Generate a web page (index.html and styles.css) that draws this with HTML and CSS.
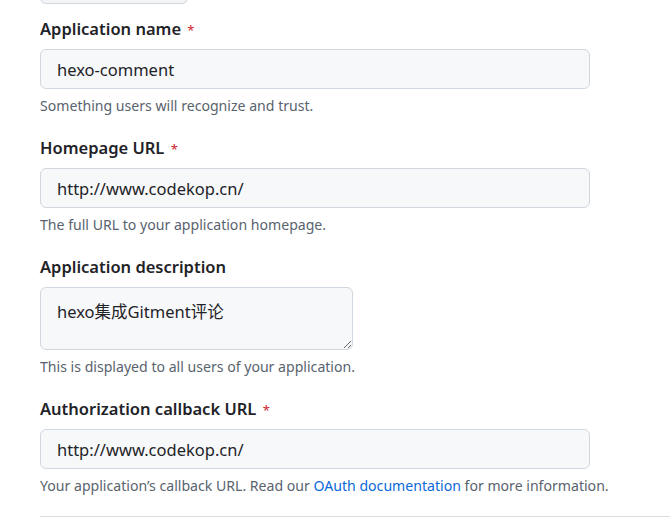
FILE: index.html
```html
<!DOCTYPE html>
<html lang="en">
<head>
<meta charset="utf-8">
<link rel="stylesheet" href="styles.css">
</head>
<body>
<div class="page">
  <div class="prev-button"></div>
  <form class="form">
    <div class="group">
      <label class="label">Application name <span class="req">*</span></label>
      <input class="control" type="text" value="hexo-comment">
      <p class="note">Something users will recognize and trust.</p>
    </div>
    <div class="group">
      <label class="label">Homepage URL <span class="req">*</span></label>
      <input class="control" type="text" value="http://www.codekop.cn/">
      <p class="note">The full URL to your application homepage.</p>
    </div>
    <div class="group">
      <label class="label">Application description</label>
      <textarea class="control area">hexo集成Gitment评论</textarea>
      <p class="note">This is displayed to all users of your application.</p>
    </div>
    <div class="group">
      <label class="label">Authorization callback URL <span class="req">*</span></label>
      <input class="control" type="text" value="http://www.codekop.cn/">
      <p class="note">Your application’s callback URL. Read our <a class="link" href="#">OAuth documentation</a> for more information.</p>
    </div>
    <hr class="rule">
  </form>
</div>
</body>
</html>
```
FILE: styles.css
```css
html, body {
  margin: 0;
  padding: 0;
  background: #ffffff;
}
body {
  font-family: "Noto Sans", "Noto Sans CJK SC", sans-serif;
  color: #1f2328;
  overflow: hidden;
}
.page {
  padding-left: 40px;
}
.prev-button {
  width: 148px;
  height: 32px;
  margin-top: -28px;
  border: 1px solid #d0d7de;
  border-radius: 6px;
  background: #f3f4f6;
  box-sizing: border-box;
}
.form {
  display: flex;
  flex-direction: column;
  gap: 20px;
  padding-top: 13px;
}
.group {
  display: flex;
  flex-direction: column;
  align-items: flex-start;
}
.label {
  font-size: 16.5px;
  font-weight: 600;
  line-height: 24px;
  height: 24px;
  margin-bottom: 8px;
  color: #1f2328;
}
.req {
  color: #cf222e;
  font-size: 13px;
  font-weight: 400;
  margin-left: 2px;
}
.control {
  box-sizing: border-box;
  width: 550px;
  height: 40px;
  padding: 0 16px;
  border: 1px solid #d0d7de;
  border-radius: 6px;
  background: #f6f8fa;
  font-family: "Noto Sans", "Noto Sans CJK SC", sans-serif;
  font-size: 16.5px;
  color: #1f2328;
  outline: none;
  margin: 0;
}
.area {
  width: 313px;
  height: 63px;
  padding: 11px 16px;
  line-height: 26px;
  resize: both;
}
.note {
  margin: 7px 0 0;
  font-size: 14.1px;
  line-height: 20px;
  color: #59636e;
}
.link {
  color: #0969da;
  text-decoration: none;
}
.rule {
  margin: 0;
  border: 0;
  border-top: 1px solid #d8dee4;
  height: 0;
}
```
